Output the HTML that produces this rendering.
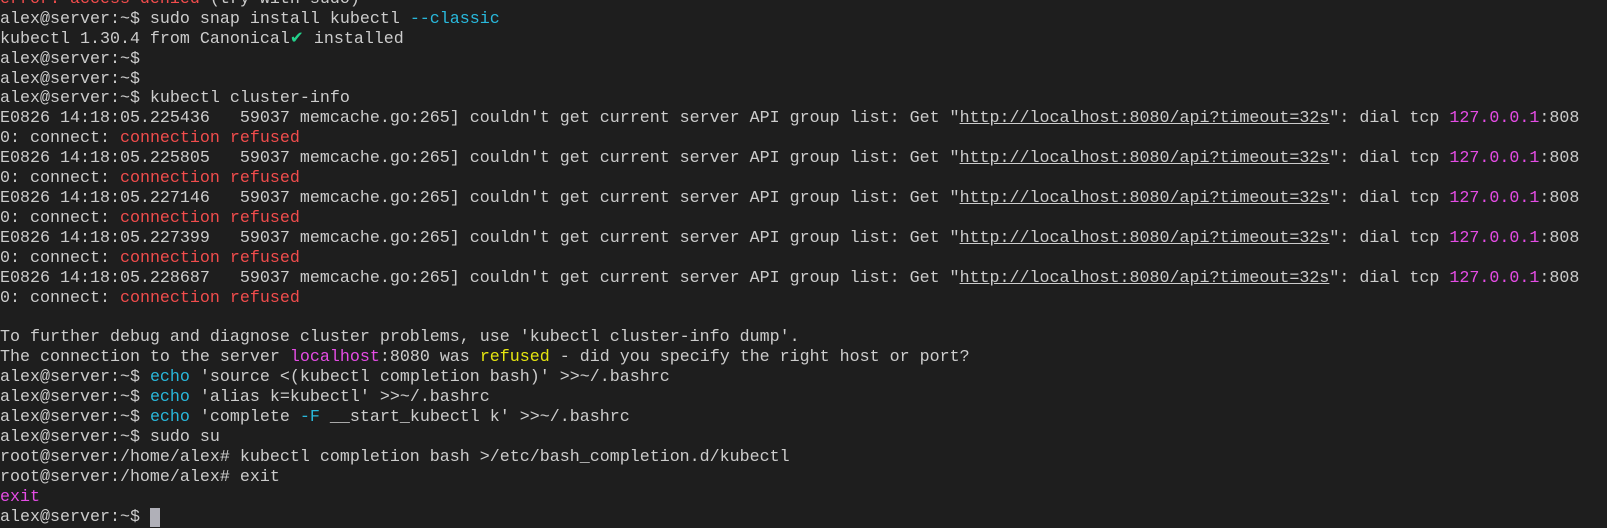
<!DOCTYPE html>
<html><head><meta charset="utf-8"><style>
html,body{margin:0;padding:0;background:#1e1e1e;width:1607px;height:517px;overflow:hidden}
#t{position:absolute;left:0;top:-10.2px;font-family:"Liberation Mono",monospace;font-size:16.66px;color:#cccccc;white-space:normal}
#t div{height:19.93px;line-height:19.93px;white-space:pre}
.r{color:#f14c4c}.c{color:#29b8db}.m{color:#e44ce4}.y{color:#e5e510}.g{color:#23d18b}.u{text-decoration:underline}
.cur{background:#b0b0b8;color:#b0b0b8}
</style></head><body><div id="t">
<div><span class="r">error: access denied</span> (try with sudo)</div>
<div>alex@server:~$ sudo snap install kubectl <span class="c">--classic</span></div>
<div>kubectl 1.30.4 from Canonical<span class="g">✔</span> installed</div>
<div>alex@server:~$</div>
<div>alex@server:~$</div>
<div>alex@server:~$ kubectl cluster-info</div>
<div>E0826 14:18:05.225436   59037 memcache.go:265] couldn't get current server API group list: Get "<span class="u">http://localhost:8080/api?timeout=32s</span>": dial tcp <span class="m">127.0.0.1</span>:808</div>
<div>0: connect: <span class="r">connection refused</span></div>
<div>E0826 14:18:05.225805   59037 memcache.go:265] couldn't get current server API group list: Get "<span class="u">http://localhost:8080/api?timeout=32s</span>": dial tcp <span class="m">127.0.0.1</span>:808</div>
<div>0: connect: <span class="r">connection refused</span></div>
<div>E0826 14:18:05.227146   59037 memcache.go:265] couldn't get current server API group list: Get "<span class="u">http://localhost:8080/api?timeout=32s</span>": dial tcp <span class="m">127.0.0.1</span>:808</div>
<div>0: connect: <span class="r">connection refused</span></div>
<div>E0826 14:18:05.227399   59037 memcache.go:265] couldn't get current server API group list: Get "<span class="u">http://localhost:8080/api?timeout=32s</span>": dial tcp <span class="m">127.0.0.1</span>:808</div>
<div>0: connect: <span class="r">connection refused</span></div>
<div>E0826 14:18:05.228687   59037 memcache.go:265] couldn't get current server API group list: Get "<span class="u">http://localhost:8080/api?timeout=32s</span>": dial tcp <span class="m">127.0.0.1</span>:808</div>
<div>0: connect: <span class="r">connection refused</span></div>
<div> </div>
<div>To further debug and diagnose cluster problems, use 'kubectl cluster-info dump'.</div>
<div>The connection to the server <span class="m">localhost</span>:8080 was <span class="y">refused</span> - did you specify the right host or port?</div>
<div>alex@server:~$ <span class="c">echo</span> 'source &lt;(kubectl completion bash)' &gt;&gt;~/.bashrc</div>
<div>alex@server:~$ <span class="c">echo</span> 'alias k=kubectl' &gt;&gt;~/.bashrc</div>
<div>alex@server:~$ <span class="c">echo</span> 'complete <span class="c">-F</span> __start_kubectl k' &gt;&gt;~/.bashrc</div>
<div>alex@server:~$ sudo su</div>
<div>root@server:/home/alex# kubectl completion bash &gt;/etc/bash_completion.d/kubectl</div>
<div>root@server:/home/alex# exit</div>
<div><span class="m">exit</span></div>
<div>alex@server:~$ <span class="cur"> </span></div>
</div></body></html>
